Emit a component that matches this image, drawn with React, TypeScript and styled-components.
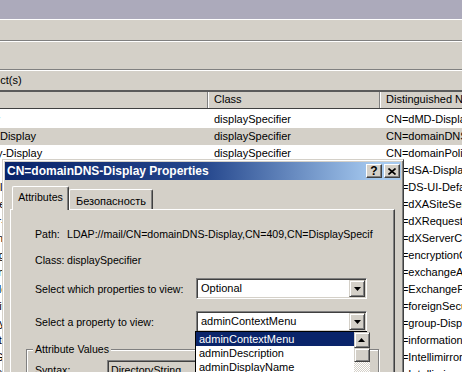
import React from 'react';
import styled, { createGlobalStyle } from 'styled-components';

const FACE = '#d4d0c8';

const Global = createGlobalStyle`
  *, *::before, *::after { box-sizing: border-box; }
  html, body { margin: 0; padding: 0; }
  body {
    width: 462px; height: 372px; overflow: hidden; background: ${FACE};
    font-family: "Liberation Sans", Arial, sans-serif; font-size: 10.6px; color: #000;
  }
`;

const Desktop = styled.div`
  position: relative; width: 462px; height: 372px; overflow: hidden; background: ${FACE};
`;

/* ---------- background MMC window (partly off-screen) ---------- */
const AppWindow = styled.div`
  position: absolute; left: -100px; top: 0; width: 700px; height: 372px;
  display: flex; flex-direction: column; background: ${FACE}; font-size: 11px;
`;
const AppTitle = styled.div` height: 19px; background: #acaabb; flex: none; `;
const MenuBar = styled.div`
  height: 22px; flex: none; border-top: 1px solid #fff; border-bottom: 1px solid #808080;
`;
const ToolBar = styled.div`
  height: 29px; flex: none; border-top: 1px solid #fff; border-bottom: 1px solid #808080;
`;
const DescBar = styled.div`
  height: 22px; flex: none; border-top: 1px solid #fff; border-bottom: 2px solid #5a5a5a;
  padding-left: 77px; line-height: 19px; white-space: nowrap;
`;
const HeaderRow = styled.div`
  display: flex; height: 17px; flex: none; border-bottom: 1px solid #404040;
`;
const HeaderCell = styled.div<{ $w?: number }>`
  flex: ${(p) => (p.$w ? `0 0 ${p.$w}px` : '1 1 auto')};
  border-left: 1px solid #fff; border-right: 1px solid #808080;
  padding-left: 5px; line-height: 15px; white-space: nowrap; overflow: hidden;
`;
const ListBody = styled.div`
  flex: 1; background: #fff; padding-top: 2px; overflow: hidden;
`;
const Row = styled.div<{ $selected?: boolean }>`
  display: flex; height: 17px; line-height: 17px; white-space: nowrap;
  background: ${(p) => (p.$selected ? FACE : '#fff')};
`;
const Cell = styled.div<{ $w?: number; $pad: number }>`
  flex: ${(p) => (p.$w ? `0 0 ${p.$w}px` : '1 1 auto')};
  padding-left: ${(p) => p.$pad}px; overflow: hidden;
`;

/* ---------- properties dialog ---------- */
const Dialog = styled.div`
  position: absolute; left: 2px; top: 159px; width: 402px; height: 260px;
  background: ${FACE}; padding: 2px; display: flex; flex-direction: column;
  border: 1px solid; border-color: ${FACE} #404040 #404040 ${FACE};
  box-shadow: inset 1px 1px #fff, inset -1px -1px #808080;
`;
const DialogTitle = styled.div`
  height: 18px; flex: none; display: flex; align-items: center; padding: 0 1px 0 2px;
  background: linear-gradient(to right, #0a246a 0%, #24468c 50%, #a6caf0 94%);
`;
const TitleText = styled.div`
  flex: 1; color: #fff; font-weight: bold; font-size: 12px; white-space: nowrap;
`;
const TitleButtons = styled.div` display: flex; gap: 2px; `;
const CaptionButton = styled.div`
  width: 16px; height: 14px; background: ${FACE};
  border: 1px solid; border-color: #fff #404040 #404040 #fff;
  box-shadow: inset -1px -1px #808080;
  display: flex; align-items: center; justify-content: center;
  font-weight: bold; font-size: 12px; line-height: 12px;
`;
const DialogBody = styled.div`
  flex: 1; display: flex; flex-direction: column; padding: 6px 6px 0 5px;
`;
const TabStrip = styled.div`
  display: flex; align-items: flex-end; height: 23px; padding-left: 2px; flex: none;
`;
const Tab = styled.div<{ $active?: boolean; $w: number }>`
  position: relative; z-index: ${(p) => (p.$active ? 1 : 0)};
  width: ${(p) => p.$w}px; height: ${(p) => (p.$active ? 24 : 20)}px;
  margin-bottom: ${(p) => (p.$active ? -1 : 0)}px;
  background: ${FACE}; text-align: center; white-space: nowrap;
  line-height: ${(p) => (p.$active ? 21 : 22)}px;
  font-size: ${(p) => (p.$active ? 10.6 : 11)}px;
  border-top: 1px solid #fff; border-left: 1px solid #fff; border-right: 1px solid #404040;
  border-radius: 2px 2px 0 0;
  box-shadow: inset -1px 0 #808080;
`;
const TabPanel = styled.div`
  flex: 1; background: ${FACE}; padding: 18px 0 0 24px;
  border-top: 1px solid #fff; border-left: 1px solid #fff; border-right: 1px solid #404040;
  box-shadow: inset -1px 0 #808080;
`;
const InfoRow = styled.div<{ $gap: number }>`
  display: flex; height: 13px; line-height: 13px; white-space: nowrap;
  margin-bottom: ${(p) => p.$gap}px;
`;
const InfoLabel = styled.div` flex: 0 0 32px; `;
const SelectRow = styled.div<{ $top: number }>`
  display: flex; align-items: center; height: 21px; margin-top: ${(p) => p.$top}px;
`;
const SelectLabel = styled.div` flex: 0 0 161px; white-space: nowrap; `;
const Combo = styled.div`
  position: relative; width: 171px; height: 21px; background: #fff; display: flex;
  padding: 1px; border: 1px solid; border-color: #808080 #fff #fff #808080;
  box-shadow: inset 1px 1px #404040, inset -1px -1px ${FACE};
`;
const ComboText = styled.div` flex: 1; padding-left: 3px; line-height: 17px; white-space: nowrap; font-size: 11px; `;
const RaisedButton = styled.div<{ $h: number }>`
  width: 16px; height: ${(p) => p.$h}px; flex: none; background: ${FACE};
  border: 1px solid; border-color: ${FACE} #404040 #404040 ${FACE};
  box-shadow: inset 1px 1px #fff, inset -1px -1px #808080;
  display: flex; align-items: center; justify-content: center;
`;
const DropList = styled.div`
  position: absolute; left: -2px; top: 19px; width: 172px; height: 120px;
  background: #fff; border: 1px solid #000; display: flex; z-index: 2;
`;
const DropItems = styled.div` flex: 1; `;
const DropItem = styled.div<{ $selected?: boolean }>`
  height: 14px; line-height: 14px; padding-left: 3px; white-space: nowrap; font-size: 11px;
  background: ${(p) => (p.$selected ? '#0a246a' : 'transparent')};
  color: ${(p) => (p.$selected ? '#fff' : '#000')};
`;
const ScrollBar = styled.div`
  width: 16px; display: flex; flex-direction: column;
  background: repeating-conic-gradient(${FACE} 0 25%, #fff 0 50%) 0 0 / 2px 2px;
`;
const GroupBox = styled.div`
  position: relative; margin: 17px 0 0 -9px; width: 353px; height: 80px;
  border: 1px solid #808080; box-shadow: inset 1px 1px #fff, 1px 1px #fff;
  padding: 10px 0 0 8px;
`;
const GroupLegend = styled.div`
  position: absolute; left: 6px; top: -7px; padding: 0 2px; background: ${FACE};
  line-height: 13px; white-space: nowrap;
`;
const FieldRow = styled.div` display: flex; align-items: flex-start; `;
const FieldLabel = styled.div` flex: 0 0 72px; margin-top: 4px; line-height: 13px; `;
const ReadOnlyBox = styled.div`
  width: 250px; height: 21px; background: ${FACE}; padding: 3px 0 0 3px; line-height: 13px;
  border: 1px solid; border-color: #808080 #fff #fff #808080;
  box-shadow: inset 1px 1px #404040, inset -1px -1px ${FACE};
`;

const Down = () => (
  <svg width="7" height="4" viewBox="0 0 7 4"><polygon points="0,0 7,0 3.5,4" fill="#000" /></svg>
);
const Up = () => (
  <svg width="7" height="4" viewBox="0 0 7 4"><polygon points="0,4 7,4 3.5,0" fill="#000" /></svg>
);
const CloseGlyph = () => (
  <svg width="8" height="7" viewBox="0 0 8 7">
    <path d="M0.5 0.5 L7.5 6.5 M7.5 0.5 L0.5 6.5" stroke="#000" strokeWidth="1.6" />
  </svg>
);

const rows = [
  ['dMD-Display', 'CN=dMD-Display,CN=409,CN=DisplaySpecifiers'],
  ['domainDNS-Display', 'CN=domainDNS-Display,CN=409,CN=DisplaySpecifiers'],
  ['domainPolicy-Display', 'CN=domainPolicy-Display,CN=409,CN=DisplaySpecifiers'],
  ['dSA-Display', 'CN=dSA-Display,CN=409,CN=DisplaySpecifiers'],
  ['DS-UI-Default-Settings', 'CN=DS-UI-Default-Settings,CN=409'],
  ['dXASiteServer-Display', 'CN=dXASiteServer-Display,CN=409'],
  ['dXRequestor-Display', 'CN=dXRequestor-Display,CN=409'],
  ['dXServerConn-Display', 'CN=dXServerConn-Display,CN=409'],
  ['encryptionCfg-Display', 'CN=encryptionCfg-Display,CN=409'],
  ['exchangeAdminService-Display', 'CN=exchangeAdminService-Display,CN=409'],
  ['ExchangeFolder-Display', 'CN=ExchangeFolder-Display,CN=409'],
  ['foreignSecurityPrincipal-Display', 'CN=foreignSecurityPrincipal-Display'],
  ['group-Display', 'CN=group-Display,CN=409'],
  ['informationStore-Display', 'CN=informationStore-Display,CN=409'],
  ['Intellimirror-Group', 'CN=Intellimirror-Group,CN=409'],
  ['Intellimirror-SCP', 'CN=Intellimirror-SCP,CN=409'],
];

export default function App() {
  return (
    <Desktop>
      <Global />
      <AppWindow>
        <AppTitle />
        <MenuBar />
        <ToolBar />
        <DescBar>Object(s)</DescBar>
        <HeaderRow>
          <HeaderCell $w={308}>Name</HeaderCell>
          <HeaderCell $w={172}>Class</HeaderCell>
          <HeaderCell>Distinguished Name</HeaderCell>
        </HeaderRow>
        <ListBody>
          {rows.map(([name, dn], i) => (
            <Row key={name} $selected={i === 1}>
              <Cell $w={308} $pad={37}>{name}</Cell>
              <Cell $w={172} $pad={6}>displaySpecifier</Cell>
              <Cell $pad={6}>{dn}</Cell>
            </Row>
          ))}
        </ListBody>
      </AppWindow>

      <Dialog>
        <DialogTitle>
          <TitleText>CN=domainDNS-Display Properties</TitleText>
          <TitleButtons>
            <CaptionButton>?</CaptionButton>
            <CaptionButton><CloseGlyph /></CaptionButton>
          </TitleButtons>
        </DialogTitle>
        <DialogBody>
          <TabStrip>
            <Tab $active $w={57}>Attributes</Tab>
            <Tab $w={84}>Безопасность</Tab>
          </TabStrip>
          <TabPanel>
            <InfoRow $gap={13}>
              <InfoLabel>Path:</InfoLabel>
              <div>LDAP://mail/CN=domainDNS-Display,CN=409,CN=DisplaySpecif</div>
            </InfoRow>
            <InfoRow $gap={0}>
              <InfoLabel>Class:</InfoLabel>
              <div>displaySpecifier</div>
            </InfoRow>
            <SelectRow $top={11}>
              <SelectLabel>Select which properties to view:</SelectLabel>
              <Combo>
                <ComboText>Optional</ComboText>
                <RaisedButton $h={17}><Down /></RaisedButton>
              </Combo>
            </SelectRow>
            <SelectRow $top={12}>
              <SelectLabel>Select a property to view:</SelectLabel>
              <Combo>
                <ComboText>adminContextMenu</ComboText>
                <RaisedButton $h={17}><Down /></RaisedButton>
                <DropList>
                  <DropItems>
                    <DropItem $selected>adminContextMenu</DropItem>
                    <DropItem>adminDescription</DropItem>
                    <DropItem>adminDisplayName</DropItem>
                    <DropItem>adminMultiselectPropertyPages</DropItem>
                  </DropItems>
                  <ScrollBar>
                    <RaisedButton $h={16}><Up /></RaisedButton>
                    <RaisedButton $h={14} />
                  </ScrollBar>
                </DropList>
              </Combo>
            </SelectRow>
            <GroupBox>
              <GroupLegend>Attribute Values</GroupLegend>
              <FieldRow>
                <FieldLabel>Syntax:</FieldLabel>
                <ReadOnlyBox>DirectoryString</ReadOnlyBox>
              </FieldRow>
            </GroupBox>
          </TabPanel>
        </DialogBody>
      </Dialog>
    </Desktop>
  );
}
